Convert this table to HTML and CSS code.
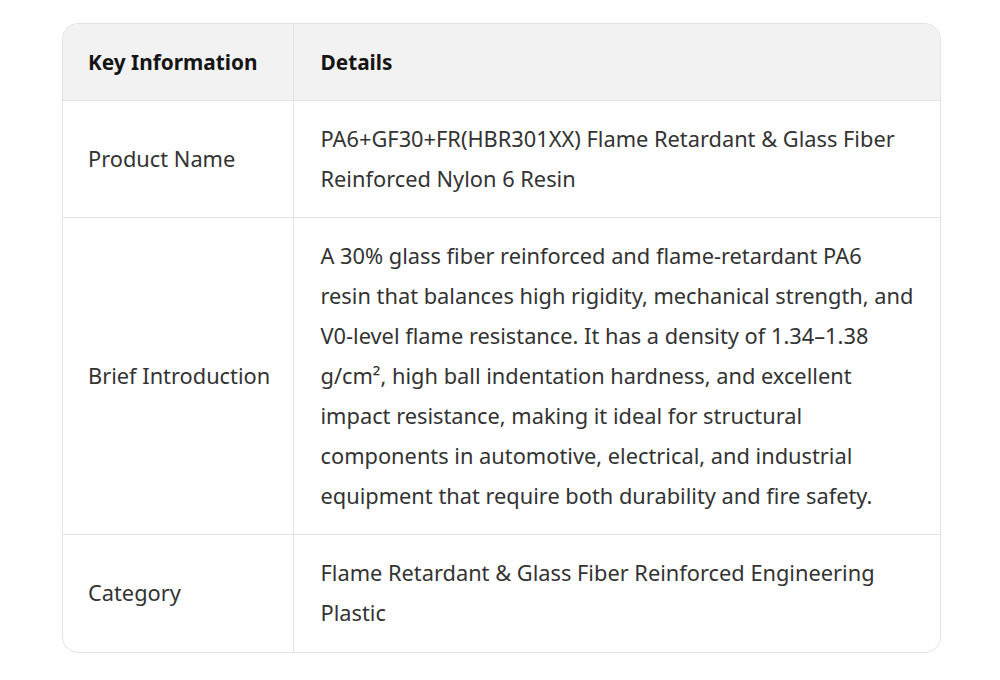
FILE: index.html
```html
<!DOCTYPE html>
<html lang="en">
<head>
<meta charset="utf-8">
<title>Key Information</title>
<link rel="stylesheet" href="styles.css">
</head>
<body>
<div class="card">
  <table class="info">
    <thead>
      <tr><th class="key">Key Information</th><th>Details</th></tr>
    </thead>
    <tbody>
      <tr><td class="key">Product Name</td><td>PA6+GF30+FR(HBR301XX) Flame Retardant &amp; Glass Fiber Reinforced Nylon 6 Resin</td></tr>
      <tr><td class="key">Brief Introduction</td><td>A 30% glass fiber reinforced and flame-retardant PA6 resin that balances high rigidity, mechanical strength, and V0-level flame resistance. It has a density of 1.34–1.38 g/cm², high ball indentation hardness, and excellent impact resistance, making it ideal for structural components in automotive, electrical, and industrial equipment that require both durability and fire safety.</td></tr>
      <tr><td class="key">Category</td><td>Flame Retardant &amp; Glass Fiber Reinforced Engineering Plastic</td></tr>
    </tbody>
  </table>
</div>
</body>
</html>
```

FILE: styles.css
```css
html, body {
  margin: 0;
  padding: 0;
  background: #ffffff;
}
body {
  padding: 23px 59px 0 62px;
  font-family: "Noto Sans", "Open Sans", sans-serif;
  font-size: 21.8px;
  color: #333333;
}
.card {
  width: 877px;
  border: 1px solid #e3e3e3;
  border-radius: 16px;
  overflow: hidden;
}
.info {
  width: 100%;
  border-collapse: collapse;
  table-layout: fixed;
}
.info th, .info td {
  text-align: left;
  vertical-align: middle;
  padding: 18px 26px 18px 27px;
  line-height: 40px;
}
.info th {
  background: #f2f2f2;
  font-weight: 700;
  font-size: 20.8px;
  color: #151515;
}
.info .key {
  width: 230px;
  box-sizing: border-box;
  padding-left: 25px;
  padding-right: 10px;
  white-space: nowrap;
  border-right: 1px solid #e3e3e3;
}
.info tbody tr td {
  border-top: 1px solid #e3e3e3;
}
.info tbody tr:last-child td {
  padding-bottom: 19px;
}
```
